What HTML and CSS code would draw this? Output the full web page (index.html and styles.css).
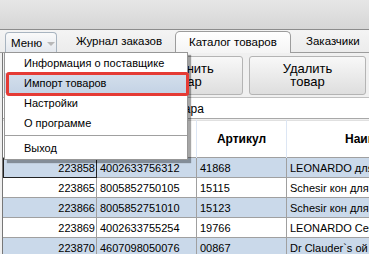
FILE: index.html
```html
<!DOCTYPE html>
<html>
<head>
    <title>Каталог товаров</title>
    <link rel="stylesheet" href="styles.css">
</head>
<body>
    <div class="window">
        <div class="titlebar"></div>

        <!-- Tabs -->
        <div class="tabbar">
            <div class="menu-btn">Меню <span class="arrow"></span></div>
            <div class="tab journal">Журнал заказов</div>
            <div class="tab active">Каталог товаров</div>
            <div class="tab clients">Заказчики</div>
        </div>

        <div class="content">
            <div class="toolbar">
                <button class="btn">Изменить<br>товар</button>
                <button class="btn">Удалить<br>товар</button>
            </div>
            <div class="search">Наименование товара</div>

            <table class="grid">
                <thead>
                    <tr>
                        <th class="c1"></th>
                        <th class="c2"></th>
                        <th class="c3">Артикул</th>
                        <th class="c4">Наименование</th>
                    </tr>
                </thead>
                <tbody>
                    <tr class="alt"><td class="num selected">223858</td><td>4002633756312</td><td>41868</td><td>LEONARDO для кошек</td></tr>
                    <tr><td class="num">223865</td><td>8005852750105</td><td>15115</td><td>Schesir кон для кошек</td></tr>
                    <tr class="alt"><td class="num">223866</td><td>8005852751010</td><td>15123</td><td>Schesir кон для кошек</td></tr>
                    <tr><td class="num">223869</td><td>4002633755254</td><td>19766</td><td>LEONARDO Сеньор</td></tr>
                    <tr class="alt"><td class="num">223870</td><td>4607098050076</td><td>00867</td><td>Dr Clauder`s ой для</td></tr>
                    <tr><td class="num">223871</td><td>5000174450889</td><td>11818</td><td>Eukanuba</td></tr>
                </tbody>
            </table>
        </div>

        <!-- Dropdown menu -->
        <div class="dropdown">
            <div class="item">Информация о поставщике</div>
            <div class="item hover">Импорт товаров</div>
            <div class="item">Настройки</div>
            <div class="item">О программе</div>
            <div class="sep"></div>
            <div class="item">Выход</div>
        </div>
    </div>
</body>
</html>
```

FILE: styles.css
```css
/* General */
body {
    margin: 0;
    font-family: 'Liberation Sans', Arial, sans-serif;
    font-size: 11px;
    color: #000;
    background: #f0f0f0;
    overflow: hidden;
}

.window {
    position: relative;
    width: 369px;
    height: 254px;
    overflow: hidden;
}

.titlebar {
    height: 29px;
    background: linear-gradient(#e6e6e6, #d6d6d6);
    border-bottom: 1px solid #8c8c8c;
}

/* Tabs */
.tabbar {
    display: flex;
    align-items: flex-end;
    height: 22px;
    padding-left: 5px;
    background: linear-gradient(#f4f4f4, #ececec);
    border-bottom: 1px solid #9c9c9c;
    white-space: nowrap;
}

.menu-btn {
    flex-shrink: 0;
    box-sizing: border-box;
    width: 52px;
    height: 20px;
    padding-left: 5px;
    border: 1px solid #a8b4c0;
    border-bottom: none;
    border-radius: 4px 4px 0 0;
    background: linear-gradient(#fafafa, #e4e8ee);
    display: flex;
    align-items: center;
    gap: 5px;
    font-size: 11.5px;
}

.arrow {
    width: 0;
    height: 0;
    margin-top: 2px;
    border-left: 4px solid transparent;
    border-right: 4px solid transparent;
    border-top: 4px solid #b8b8b8;
}

.tab {
    flex-shrink: 0;
    box-sizing: border-box;
    height: 21px;
    line-height: 21px;
    font-size: 11.5px;
}

.tab.journal {
    width: 118px;
    padding-left: 19px;
}

.tab.active {
    width: 116px;
    height: 22px;
    padding-left: 13px;
    margin-bottom: -1px;
    border: 1px solid #9c9c9c;
    border-bottom: none;
    border-radius: 5px 5px 0 0;
    background: linear-gradient(#ffffff, #f4f4f4);
}

.tab.clients {
    padding-left: 15px;
}

/* Content */
.content {
    border-left: 1px solid #777;
    margin-left: 2px;
    padding-top: 3px;
}

.toolbar {
    display: flex;
    justify-content: flex-end;
    gap: 6px;
    padding-right: 3px;
}

.btn {
    width: 117px;
    height: 39px;
    font-family: inherit;
    font-size: 13px;
    line-height: 13px;
    border: 1px solid #b4b4b4;
    border-radius: 3px;
    background: linear-gradient(#f8f8f8, #dedede);
    padding: 0 0 2px 0;
}

.search {
    height: 20px;
    line-height: 23px;
    margin-top: 2px;
    padding-left: 76px;
    border-top: 1px solid #c0c0c0;
    border-bottom: 1px solid #a8a8a8;
    background: #fff;
    font-size: 12px;
}

.grid {
    border-collapse: collapse;
    table-layout: fixed;
    width: 400px;
    margin-top: 1px;
}

.grid th {
    height: 36px;
    background: #fff;
    font-weight: bold;
    font-size: 12px;
    padding: 0;
    border-right: 1px solid #dce6f4;
    border-top: 1px solid #e0e0e0;
}

.grid th.c4 {
    text-align: left;
    padding-left: 58px;
}

.c1 { width: 93px; }
.c2 { width: 99px; }
.c3 { width: 89px; }

.grid td {
    height: 19px;
    padding: 0 0 0 3px;
    border: 1px solid #a0a0a0;
    border-left: none;
    white-space: nowrap;
    overflow: hidden;
    background: #fff;
}

.grid tr.alt td {
    background: #cad9ea;
}

.grid td.num {
    text-align: right;
    padding: 0 1px 0 0;
}

.grid td.selected {
    outline: 1px solid #222;
    outline-offset: -1px;
}

/* Dropdown menu */
.dropdown {
    position: absolute;
    left: 4px;
    top: 52px;
    width: 182px;
    padding: 0 0 1px 0;
    background: #fff;
    border: 1px solid #979797;
    box-shadow: 3px 3px 1px rgba(0, 0, 0, 0.35);
    font-size: 11px;
}

.dropdown .item {
    position: relative;
    height: 20px;
    line-height: 21px;
    padding-left: 19px;
}

.dropdown .item.hover {
    background: linear-gradient(#d4dfec, #c4d3e5);
}

.dropdown .item.hover::after {
    content: "";
    position: absolute;
    left: 1px;
    top: -1px;
    width: 177px;
    height: 18px;
    border: 3px solid #e53b35;
    border-radius: 3px;
}

.dropdown .sep {
    height: 1px;
    margin: 2px 0 2px 0;
    background: #a0a0a0;
}
```
